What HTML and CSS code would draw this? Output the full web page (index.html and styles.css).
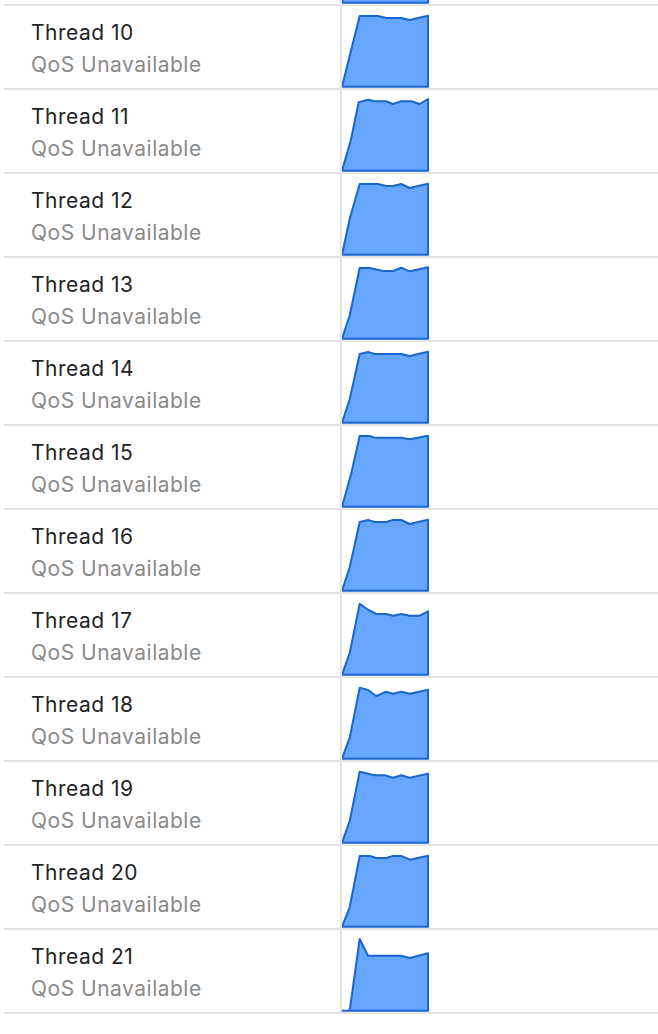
FILE: index.html
```html
<!DOCTYPE html>
<html>
<head>
<meta charset="utf-8">
<link rel="stylesheet" href="styles.css">
</head>
<body>
<div class="list">
  <div class="row">
    <div class="info"><div class="name">Thread 9</div><div class="qos">QoS Unavailable</div></div>
    <div class="chart"><svg viewBox="0 0 88 82" width="88" height="82"><polygon points="0,80.7 17.7,10 86,10 86,80.7"/></svg></div>
  </div>
  <div class="row">
    <div class="info"><div class="name">Thread 10</div><div class="qos">QoS Unavailable</div></div>
    <div class="chart"><svg viewBox="0 0 88 82" width="88" height="82"><polygon points="0,80.7 17.7,10 36,10 44.3,12 59.3,12 67.7,14 76,12 86,9.7 86,80.7"/></svg></div>
  </div>
  <div class="row">
    <div class="info"><div class="name">Thread 11</div><div class="qos">QoS Unavailable</div></div>
    <div class="chart"><svg viewBox="0 0 88 82" width="88" height="82"><polygon points="0,80.7 8.7,50.7 16.7,12.3 26,9.7 32.7,11.3 44.3,11.3 51,14 59.3,11.3 69.3,11.3 77.7,14 86,9 86,80.7"/></svg></div>
  </div>
  <div class="row">
    <div class="info"><div class="name">Thread 12</div><div class="qos">QoS Unavailable</div></div>
    <div class="chart"><svg viewBox="0 0 88 82" width="88" height="82"><polygon points="0,80.7 7.7,44.7 17.7,10 36,10 44.3,12 51,12 59.3,10 67.7,14 86,9.7 86,80.7"/></svg></div>
  </div>
  <div class="row">
    <div class="info"><div class="name">Thread 13</div><div class="qos">QoS Unavailable</div></div>
    <div class="chart"><svg viewBox="0 0 88 82" width="88" height="82"><polygon points="0,80.7 7.7,57.3 17.7,10 27.7,10 41,13 51,13 59.3,9.7 67.7,13.3 86,9.3 86,80.7"/></svg></div>
  </div>
  <div class="row">
    <div class="info"><div class="name">Thread 14</div><div class="qos">QoS Unavailable</div></div>
    <div class="chart"><svg viewBox="0 0 88 82" width="88" height="82"><polygon points="0,80.7 7.7,57.3 17.7,12 26,10 32.7,12 59.3,12 67.7,14 86,9.7 86,80.7"/></svg></div>
  </div>
  <div class="row">
    <div class="info"><div class="name">Thread 15</div><div class="qos">QoS Unavailable</div></div>
    <div class="chart"><svg viewBox="0 0 88 82" width="88" height="82"><polygon points="0,80.7 9.3,47.3 17.7,10 27.7,10 32.7,11.7 59.3,11.7 67.7,13.3 86,9.7 86,80.7"/></svg></div>
  </div>
  <div class="row">
    <div class="info"><div class="name">Thread 16</div><div class="qos">QoS Unavailable</div></div>
    <div class="chart"><svg viewBox="0 0 88 82" width="88" height="82"><polygon points="0,80.7 7.7,57.3 17.7,12 26,10 32.7,12 44.3,12 51,10 59.3,10 67.7,14 86,9.7 86,80.7"/></svg></div>
  </div>
  <div class="row">
    <div class="info"><div class="name">Thread 17</div><div class="qos">QoS Unavailable</div></div>
    <div class="chart"><svg viewBox="0 0 88 82" width="88" height="82"><polygon points="0,80.7 7.7,59 17.7,9.7 26,15.7 34.3,20 44.3,20 51,21.7 59.3,20 67.7,21.7 77.7,21.7 86,17.3 86,80.7"/></svg></div>
  </div>
  <div class="row">
    <div class="info"><div class="name">Thread 18</div><div class="qos">QoS Unavailable</div></div>
    <div class="chart"><svg viewBox="0 0 88 82" width="88" height="82"><polygon points="0,80.7 7.7,59.7 17.7,9.7 26,12 34.3,18 44.3,13.7 51,15.7 59.3,13.7 67.7,15.7 86,11.7 86,80.7"/></svg></div>
  </div>
  <div class="row">
    <div class="info"><div class="name">Thread 19</div><div class="qos">QoS Unavailable</div></div>
    <div class="chart"><svg viewBox="0 0 88 82" width="88" height="82"><polygon points="0,80.7 7.7,59 17.7,9.7 32.7,13.3 42.7,13.3 51,15.7 59.3,13.3 67.7,15.7 86,11.7 86,80.7"/></svg></div>
  </div>
  <div class="row">
    <div class="info"><div class="name">Thread 20</div><div class="qos">QoS Unavailable</div></div>
    <div class="chart"><svg viewBox="0 0 88 82" width="88" height="82"><polygon points="0,80.7 7.7,61.3 17.7,10 27.7,10 34.3,12 44.3,12 51,10 59.3,10 67.7,13.7 86,9.7 86,80.7"/></svg></div>
  </div>
  <div class="row last">
    <div class="info"><div class="name">Thread 21</div><div class="qos">QoS Unavailable</div></div>
    <div class="chart"><svg viewBox="0 0 88 82" width="88" height="82"><polygon points="0,80.7 7.7,80.7 17.7,9 26,25.7 59.3,25.7 67.7,28 86,23.3 86,80.7"/></svg></div>
  </div>
</div>
</body>
</html>
```
FILE: styles.css
```css
html, body {
  margin: 0;
  padding: 0;
  background: #ffffff;
}

body {
  font-family: Inter, "Noto Sans", "Liberation Sans", sans-serif;
  overflow: hidden;
}

.list {
  margin: -80px 0 0 4px;
}

.row {
  display: flex;
  height: 82px;
  border-top: 2px solid #e4e4e4;
}

.row.last {
  border-bottom: 2px solid #e4e4e4;
}

.info {
  width: 336px;
  box-sizing: border-box;
  padding: 10.9px 0 0 27px;
  font-size: 21px;
  line-height: 32px;
  letter-spacing: 0.5px;
}

.name {
  color: #242424;
}

.qos {
  color: #8a8a8a;
}

.chart {
  flex: 1;
  border-left: 2px solid #e4e4e4;
}

.chart svg {
  display: block;
}

.chart polygon {
  fill: #66a6ff;
  stroke: #1a66cc;
  stroke-width: 2;
  stroke-linejoin: round;
}
```
